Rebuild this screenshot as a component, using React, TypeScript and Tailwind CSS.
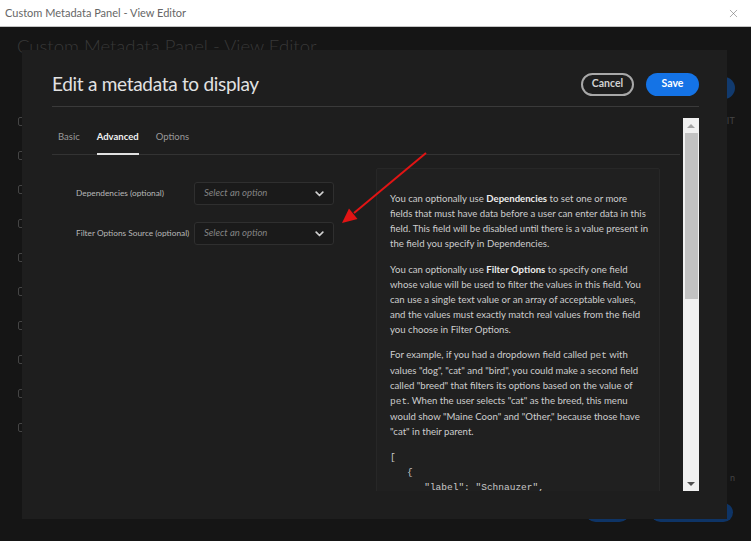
import { X } from 'lucide-react'

function Chevron() {
  return (
    <svg width="9" height="6" viewBox="0 0 9 6" fill="none">
      <path d="M1.2 1.2l3.3 3.3 3.3-3.3" stroke="#d0d0d0" strokeWidth="1.7" strokeLinecap="round" strokeLinejoin="round" />
    </svg>
  )
}

function Select() {
  return (
    <div className="w-[140px] h-[23px] rounded-[3px] border border-[#2f2f2f] bg-[#1a1a1a] flex items-center justify-between pl-[9px] pr-[9px]">
      <span className="italic text-[9.5px] text-[#858585]">Select an option</span>
      <Chevron />
    </div>
  )
}

function Code({ children }: { children: React.ReactNode }) {
  return <span className="font-['Liberation_Mono',monospace] text-[9.5px] text-[#c8c8c8]">{children}</span>
}

export default function App() {
  const checkRows = [0, 1, 2, 3, 4, 5, 6, 7, 8, 9]

  return (
    <div className="relative w-[751px] h-[541px] overflow-hidden bg-[#151515] font-['Lato',sans-serif]">
      {/* window chrome */}
      <div className="h-[27px] bg-white border-b border-[#c4c4c4] flex items-center justify-between pl-[5px] pr-[11px]">
        <span className="text-[11px] text-[#666]">Custom Metadata Panel - View Editor</span>
        <X size={13} strokeWidth={1} color="#666" />
      </div>

      {/* page behind the modal */}
      <div className="h-[514px] flex flex-col pl-[17px] pr-[16px]">
        <div className="h-[40px] flex items-center">
          <span className="text-[18.5px] font-light text-[#383838]">Custom Metadata Panel - View Editor</span>
        </div>
        <div className="h-[34px] flex items-center justify-end">
          <div className="w-[40px] h-[22px] rounded-full bg-[#113a6e] mt-[8px]" />
        </div>
        <div className="flex flex-col pt-[3px]">
          {checkRows.map((r) => (
            <div key={r} className="h-[34px] flex items-center justify-between">
              <div className="w-[9px] h-[9px] rounded-[2px] border border-[#444] ml-[1px]" />
              {r === 0 && <span className="text-[9px] text-[#444] tracking-wide">IT</span>}
            </div>
          ))}
          <div className="h-[24px] mt-[22px] flex items-center justify-end">
            <span className="text-[9px] text-[#444]">n</span>
          </div>
        </div>
        <div className="flex-1 flex items-end justify-end gap-[22px] pb-[19px] pr-[2px]">
          <div className="w-[43px] h-[19px] rounded-full bg-[#0e3466]" />
          <div className="w-[82px] h-[19px] rounded-full bg-[#0e3466]" />
        </div>
      </div>

      {/* modal */}
      <div className="absolute left-[22px] top-[50px] w-[705px] h-[469px] bg-[#1e1e1e] flex flex-col pl-[30px] pr-[28px]">
        <div className="h-[57px] pt-[12px] flex items-center justify-between border-b border-[#3a3a3a]">
          <h1 className="text-[19px] text-[#e2e2e2] tracking-[-0.3px]">Edit a metadata to display</h1>
          <div className="flex items-center gap-[12px]">
            <button className="w-[53px] h-[23px] rounded-full border-2 border-[#a8a8a8] text-[10.5px] font-bold text-[#d2d2d2]">
              Cancel
            </button>
            <button className="w-[53px] h-[23px] rounded-full bg-[#1473e6] text-[10.5px] font-bold text-white">
              Save
            </button>
          </div>
        </div>

        <div className="mt-[11px] h-[373px] flex">
          <div className="flex-1 mr-[3px] overflow-hidden flex flex-col">
            <div className="h-[37px] shrink-0 flex items-stretch gap-[17px] pl-[6px] border-b border-[#333]">
              <div className="flex items-center pt-[3px] text-[9.5px] text-[#9a9a9a]">Basic</div>
              <div className="flex items-center pt-[3px] text-[9.5px] font-bold text-[#f0f0f0] border-b-2 border-[#e0e0e0] -mb-px">
                Advanced
              </div>
              <div className="flex items-center pt-[3px] text-[9.5px] text-[#9a9a9a]">Options</div>
            </div>

            <div className="flex items-start">
              <div className="w-[324px] shrink-0 pl-[24px] pt-[27px] flex flex-col gap-[17px]">
                <div className="flex items-center">
                  <span className="w-[118px] text-[8.3px] text-[#b8b8b8]">Dependencies (optional)</span>
                  <Select />
                </div>
                <div className="flex items-center">
                  <span className="w-[118px] text-[8.3px] text-[#b8b8b8] whitespace-nowrap">Filter Options Source (optional)</span>
                  <Select />
                </div>
              </div>

              <div className="w-[284px] shrink-0 mt-[13px] bg-[#202020] border border-[#272727] rounded-[2px] pt-[22px] px-[13px] text-[9.6px] leading-[15px] text-[#cdcdcd] whitespace-nowrap">
                <p>
                  You can optionally use <b className="text-[#ececec]">Dependencies</b> to set one or more
                  <br />
                  fields that must have data before a user can enter data in this
                  <br />
                  field. This field will be disabled until there is a value present in
                  <br />
                  the field you specify in Dependencies.
                </p>
                <p className="mt-[11px]">
                  You can optionally use <b className="text-[#ececec]">Filter Options</b> to specify one field
                  <br />
                  whose value will be used to filter the values in this field. You
                  <br />
                  can use a single text value or an array of acceptable values,
                  <br />
                  and the values must exactly match real values from the field
                  <br />
                  you choose in Filter Options.
                </p>
                <p className="mt-[10px]">
                  For example, if you had a dropdown field called <Code>pet</Code> with
                  <br />
                  values "dog", "cat" and "bird", you could make a second field
                  <br />
                  called "breed" that filters its options based on the value of
                  <br />
                  <Code>pet</Code>. When the user selects "cat" as the breed, this menu
                  <br />
                  would show "Maine Coon" and "Other," because those have
                  <br />
                  "cat" in their parent.
                </p>
                <pre className="mt-[11px] font-['Liberation_Mono',monospace] text-[9.5px] leading-[15px] text-[#c8c8c8]">
{`[
   {
      "label": "Schnauzer",`}
                </pre>
              </div>
            </div>
          </div>

          {/* scrollbar */}
          <div className="w-[16px] shrink-0 bg-[#f0f0f0] flex flex-col items-center">
            <div className="h-[15px] flex items-center justify-center">
              <div className="w-0 h-0 border-l-[4px] border-r-[4px] border-b-[4px] border-l-transparent border-r-transparent border-b-[#a3a3a3]" />
            </div>
            <div className="w-[13px] h-[166px] bg-[#c2c2c2]" />
            <div className="flex-1" />
            <div className="h-[14px] flex items-center justify-center">
              <div className="w-0 h-0 border-l-[4px] border-r-[4px] border-t-[4px] border-l-transparent border-r-transparent border-t-[#505050]" />
            </div>
          </div>
        </div>
      </div>

      {/* annotation arrow */}
      <svg className="absolute left-[330px] top-[145px]" width="110" height="90" viewBox="0 0 110 90">
        <line x1="96" y1="8" x2="24" y2="68" stroke="#e11414" strokeWidth="2" />
        <polygon points="12,78 27.5,74 19,63.5" fill="#e11414" />
      </svg>
    </div>
  )
}
